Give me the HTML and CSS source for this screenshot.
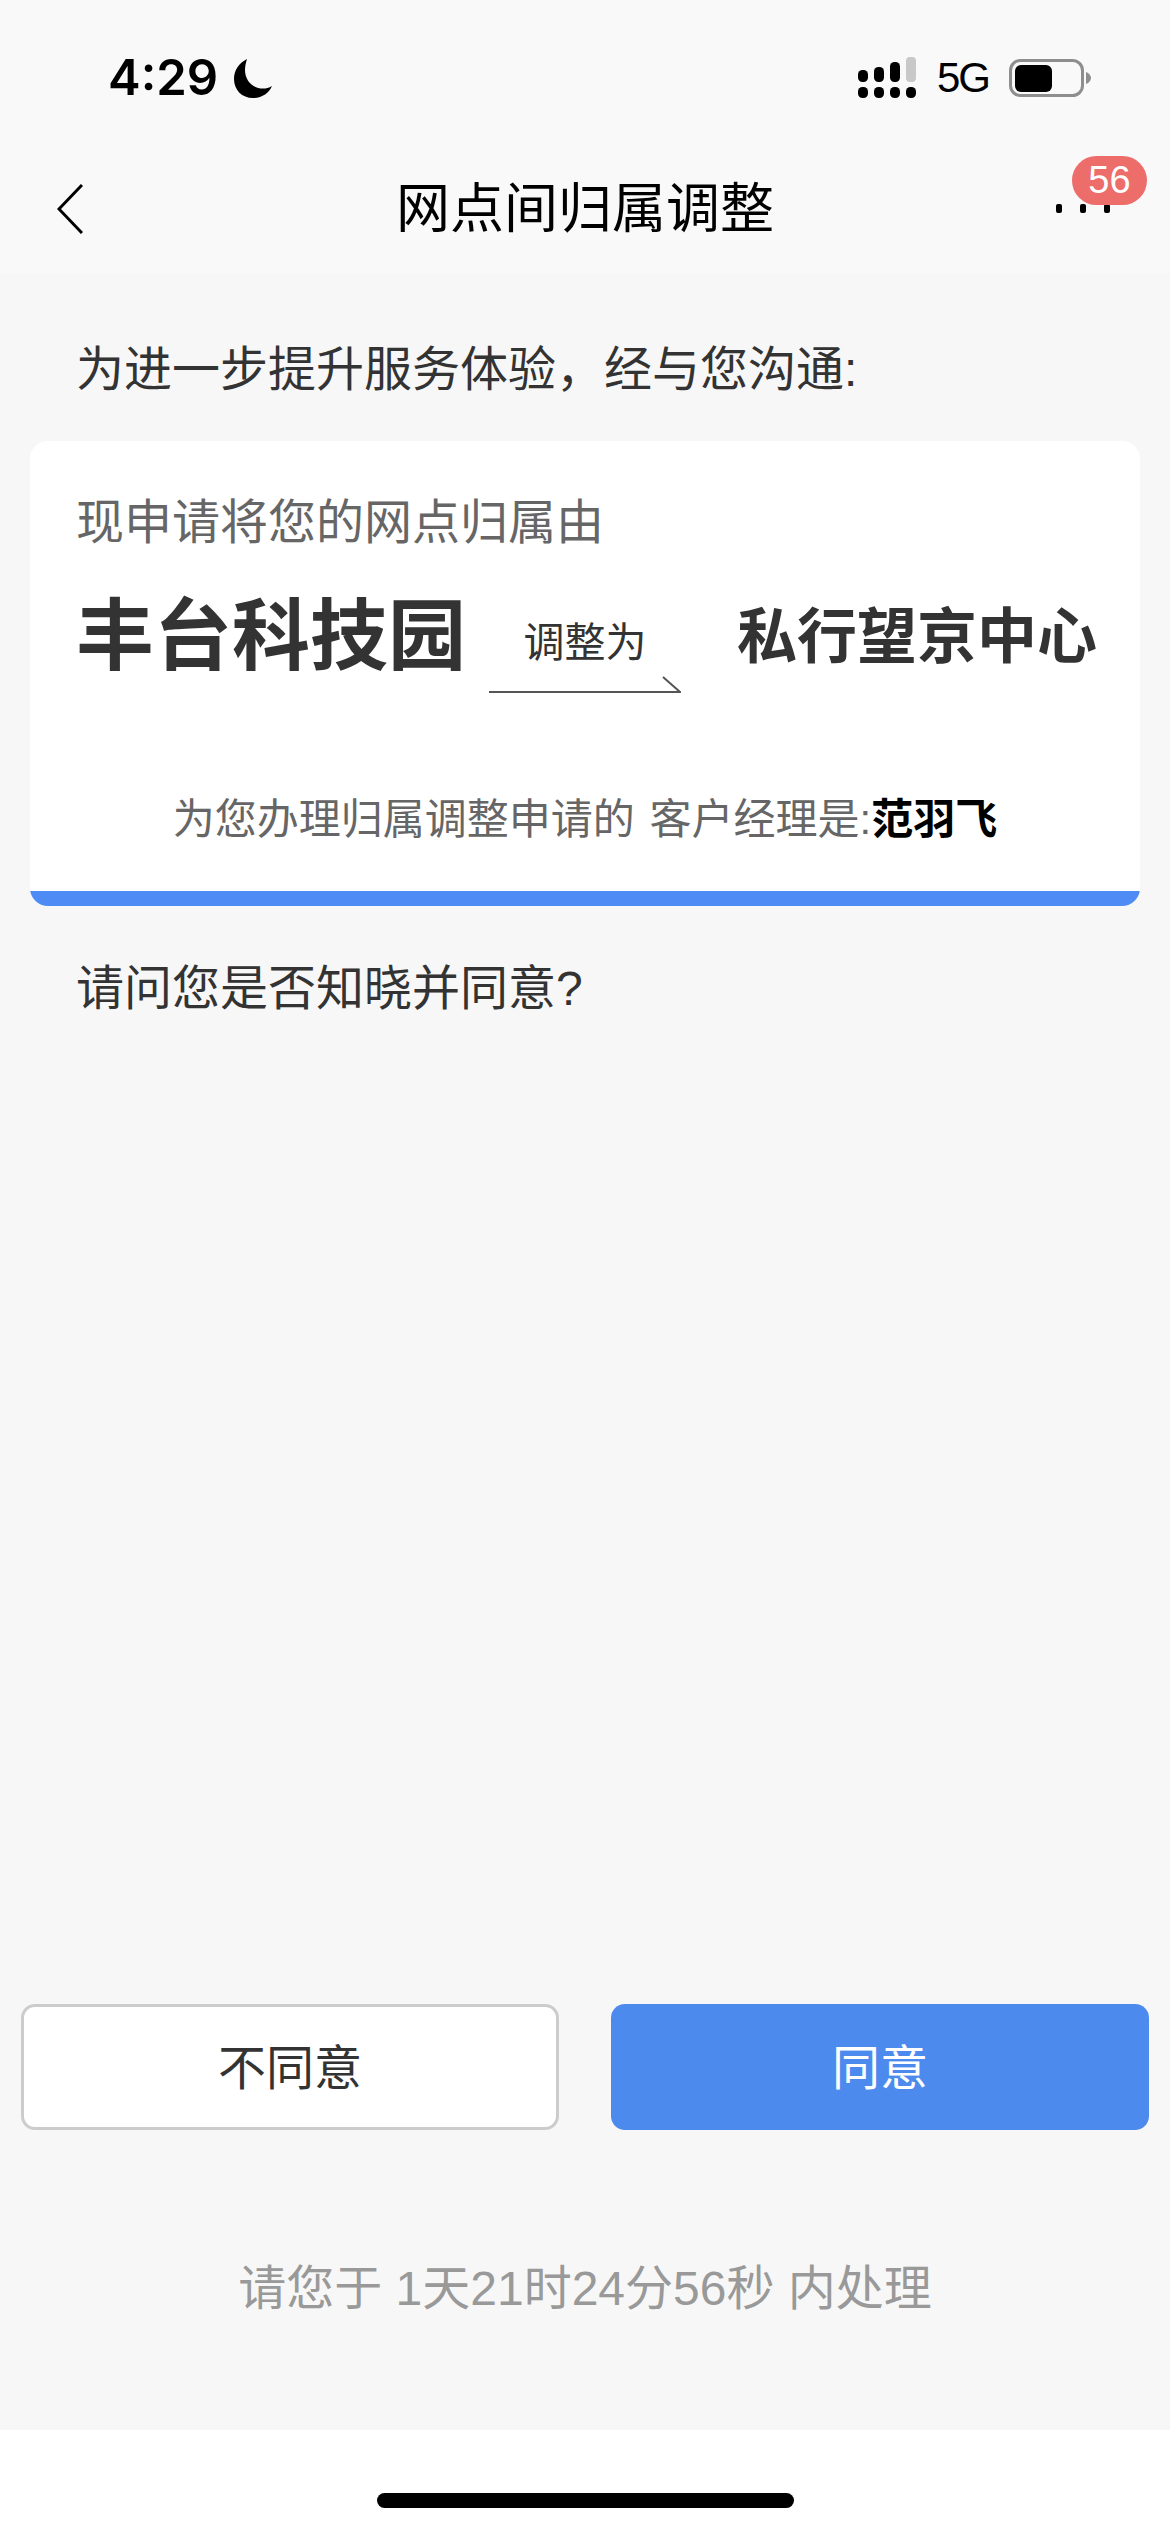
FILE: index.html
```html
<!DOCTYPE html>
<html lang="zh-CN">
<head>
<meta charset="utf-8">
<title>网点间归属调整</title>
<link rel="stylesheet" href="styles.css">
</head>
<body>
<div class="page">
  <header class="header">
    <div class="status">
      <div class="status-left">
        <span class="time">4:29</span>
        <svg class="moon" viewBox="0 0 40 40" width="40" height="40"><path d="M14 1 C6 5 1 12 1 21 C1 32 9 40 20 40 C29 40 36 35 39 28 C36 30 33 30.500 30 30.500 C20 30.500 12 23 12 12 C12 8 13 4 14 1 Z" fill="#000"/></svg>
      </div>
      <div class="status-right">
        <svg class="signal" viewBox="0 0 58 41" width="58" height="41">
          <rect x="0" y="13" width="10" height="12" rx="4.500" fill="#000"/>
          <rect x="16" y="10" width="10" height="15" rx="4.500" fill="#000"/>
          <rect x="32" y="5" width="10" height="20" rx="4.500" fill="#000"/>
          <rect x="48" y="0" width="10" height="25" rx="4" fill="#c8c8c8"/>
          <rect x="0" y="30" width="10" height="11" rx="4.500" fill="#000"/>
          <rect x="16" y="30" width="10" height="11" rx="4.500" fill="#000"/>
          <rect x="32" y="30" width="10" height="11" rx="4.500" fill="#000"/>
          <rect x="48" y="30" width="10" height="11" rx="4.500" fill="#000"/>
        </svg>
        <span class="net">5G</span>
        <svg class="battery" viewBox="0 0 82 38" width="82" height="38">
          <rect x="1.500" y="1.500" width="72" height="35" rx="10" fill="none" stroke="#8e8e8e" stroke-width="3"/>
          <rect x="6" y="6" width="37" height="27" rx="6" fill="#000"/>
          <path d="M77 13 C80 14 82 16.500 82 19 C82 21.500 80 24 77 25 Z" fill="#8e8e8e"/>
        </svg>
      </div>
    </div>
    <nav class="nav">
      <svg class="back" viewBox="0 0 26 50" width="26" height="50"><path d="M25 1 L2 25 L25 49" fill="none" stroke="#000" stroke-width="3"/></svg>
      <h1 class="title">网点间归属调整</h1>
      <div class="more">
        <i class="dot"></i><i class="dot"></i><i class="dot"></i>
        <span class="badge">56</span>
      </div>
    </nav>
  </header>

  <main class="main">
    <p class="intro">为进一步提升服务体验&#xFF0C;经与您沟通:</p>
    <section class="card">
      <div class="card-body">
        <p class="card-lead">现申请将您的网点归属由</p>
        <div class="change">
          <span class="from">丰台科技园</span>
          <div class="adjust">
            <span class="adjust-label">调整为</span>
            <svg class="arrow" viewBox="0 0 192 18" width="192" height="18"><path d="M0 16 H191 L174 1" fill="none" stroke="#555" stroke-width="2"/></svg>
          </div>
          <span class="to">私行望京中心</span>
        </div>
        <p class="manager">为您办理归属调整申请的 客户经理是:<strong class="manager-name">范羽飞</strong></p>
      </div>
      <div class="card-strip"></div>
    </section>
    <p class="question">请问您是否知晓并同意?</p>
  </main>

  <div class="actions">
    <button class="btn btn-no" type="button"><span class="btn-label">不同意</span></button>
    <button class="btn btn-yes" type="button"><span class="btn-label">同意</span></button>
  </div>
  <p class="deadline">请您于 1天21时24分56秒 内处理</p>
  <footer class="home"><div class="home-bar"></div></footer>
</div>
</body>
</html>
```

FILE: styles.css
```css
* { box-sizing: border-box; }
html, body { margin: 0; padding: 0; }
body {
  font-family: "Liberation Sans", "Noto Sans CJK SC", sans-serif;
  background: #f7f7f7;
  color: #333;
}
p, h1 { margin: 0; font-weight: 400; }
.page {
  width: 1170px;
  height: 2532px;
  display: flex;
  flex-direction: column;
  overflow: hidden;
}
.header { background: #f9f9f9; height: 273px; }
.status {
  height: 125px;
  padding: 57px 79px 0 108px;
  display: flex;
  justify-content: space-between;
  align-items: flex-start;
}
.status-left { display: flex; align-items: center; gap: 15px; height: 41px; }
.time { font-family: Inter, "Liberation Sans", sans-serif; font-size: 49px; font-weight: 600; line-height: 41px; color: #000; }
.status-right { display: flex; align-items: center; height: 41px; }
.signal { display: block; }
.net { font-size: 42px; line-height: 41px; color: #000; letter-spacing: -2px; margin: 0 20px 0 21px; }
.battery { display: block; }
.moon { display: block; }
.nav {
  height: 148px;
  padding: 0 60px 0 57px;
  display: flex;
  align-items: flex-start;
  justify-content: space-between;
  position: relative;
}
.back { display: block; margin-top: 59px; }
.title {
  position: absolute;
  left: 0;
  right: 0;
  top: 54px;
  text-align: center;
  font-size: 54px;
  line-height: 60px;
  color: #000;
}
.more {
  display: flex;
  gap: 18px;
  margin-top: 79px;
  position: relative;
}
.dot { display: block; width: 6px; height: 9px; background: #000; border-radius: 2px; }
.badge {
  position: absolute;
  left: 16px;
  top: -48px;
  width: 75px;
  height: 49px;
  border-radius: 25px;
  background: #ec6d6a;
  color: #fff;
  font-size: 38px;
  line-height: 49px;
  text-align: center;
}
.main { flex: 1; padding: 73px 30px 0; }
.intro { font-size: 48px; line-height: 48px; padding-left: 46px; color: #333; }
.card {
  margin-top: 47px;
  height: 465px;
  border-radius: 18px;
  overflow: hidden;
  display: flex;
  flex-direction: column;
  background: #fff;
}
.card-body { flex: 1; padding: 58px 0 0 46px; }
.card-lead { font-size: 48px; line-height: 48px; color: #666; }
.change { display: flex; align-items: flex-start; margin-top: 44px; height: 110px; }
.from { font-size: 78px; line-height: 92px; font-weight: 700; color: #333; width: 413px; }
.adjust { display: flex; flex-direction: column; align-items: center; width: 192px; margin-top: 29px; }
.adjust-label { font-size: 41px; line-height: 46px; color: #333; }
.arrow { display: block; margin-top: 10px; }
.to { font-size: 60px; line-height: 70px; font-weight: 700; color: #333; margin: 12px 0 0 56px; white-space: nowrap; }
.manager {
  margin-top: 96px;
  padding-right: 46px;
  text-align: center;
  font-size: 42px;
  line-height: 46px;
  word-spacing: 3px;
  color: #666;
}
.manager-name { color: #000; font-weight: 700; }
.card-strip { height: 15px; background: #4f8bf5; }
.question { font-size: 48px; line-height: 48px; margin-top: 59px; padding-left: 46px; color: #333; }
.actions { display: flex; justify-content: space-between; padding: 0 21px; height: 126px; }
.btn {
  width: 538px;
  height: 126px;
  border-radius: 14px;
  font-family: inherit;
  font-size: 48px;
  padding: 0 0 6px;
}
.btn-no { background: #fff; border: 3px solid #ccc; color: #333; }
.btn-yes { background: #4d8aee; border: 0; color: #fff; }
.btn-label { display: block; }
.deadline {
  height: 300px;
  padding-top: 135px;
  font-size: 48px;
  line-height: 48px;
  text-align: center;
  color: #999;
}
.home { background: #fff; height: 102px; padding-top: 63px; display: flex; justify-content: center; align-items: flex-start; }
.home-bar { width: 417px; height: 15px; background: #000; border-radius: 8px; }
```
